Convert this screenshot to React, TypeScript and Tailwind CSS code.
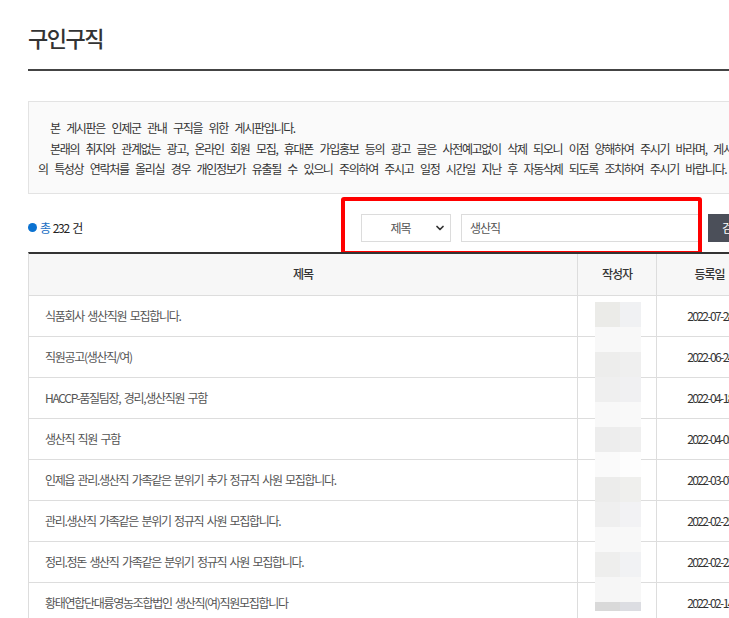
import { ChevronDown } from 'lucide-react';

const rows = [
  { title: '식품회사 생산직원 모집합니다.', date: '2022-07-28' },
  { title: '직원공고(생산직/여)', date: '2022-06-24' },
  { title: 'HACCP-품질팀장, 경리,생산직원 구함', date: '2022-04-18' },
  { title: '생산직 직원 구함', date: '2022-04-05' },
  { title: '인제읍 관리.생산직 가족같은 분위기 추가 정규직 사원 모집합니다.', date: '2022-03-07' },
  { title: '관리.생산직 가족같은 분위기 정규직 사원 모집합니다.', date: '2022-02-25' },
  { title: '정리.정돈 생산직 가족같은 분위기 정규직 사원 모집합니다.', date: '2022-02-23' },
  { title: '황태연합단대륭영농조합법인 생산직(여)직원모집합니다', date: '2022-02-14' },
];

// blurred author names, two cells per band
const mosaic = [
  ['#ebebe8', '#f0f1f3'],
  ['#f8f8f8', '#f8f8f8'],
  ['#ededec', '#efefef'],
  ['#efefef', '#f0f0f2'],
  ['#f8f8f8', '#f9f9f9'],
  ['#ededed', '#efefef'],
  ['#fafafa', '#fdfdfd'],
  ['#ececeb', '#efefed'],
  ['#efefef', '#f2f2f4'],
  ['#f8f8f8', '#f8f8f8'],
  ['#eeeeed', '#f1f2f4'],
  ['#f6f6f6', '#f7f7f7'],
];

export default function App() {
  return (
    <div className="w-full h-[618px] overflow-hidden bg-white font-['Noto_Sans_CJK_KR',sans-serif]">
      <div className="w-[1200px] ml-[28px]">
        {/* Page title */}
        <div className="pt-[24px] pb-[18px] border-b-2 border-[#444]">
          <h2 className="text-[22px] leading-[27px] tracking-[-1.5px] text-[#333] font-medium">구인구직</h2>
        </div>

        {/* Notice */}
        <div className="mt-[30px] border border-[#e3e3e3] bg-[#fafafa] pl-[9px] pt-[16px] pb-[13px] text-[12px] leading-[20.5px] tracking-[-1.3px] [word-spacing:5px] text-[#333] whitespace-nowrap">
          <p className="pl-[12px]">본 게시판은 인제군 관내 구직을 위한 게시판입니다.</p>
          <p className="pl-[12px]">
            본래의 취지와 관계없는 광고, 온라인 회원 모집, 휴대폰 가입홍보 등의 광고 글은 사전예고없이 삭제 되오니 이점 양해하여 주시기 바라며, 게시판
          </p>
          <p>의 특성상 연락처를 올리실 경우 개인정보가 유출될 수 있으니 주의하여 주시고 일정 시간일 지난 후 자동삭제 되도록 조치하여 주시기 바랍니다.</p>
        </div>

        {/* Count + search */}
        <div className="mt-[20px] flex items-center h-[28px]">
          <div className="w-[333px] flex items-center text-[12px] tracking-[-1.3px]">
            <span className="w-[9px] h-[9px] rounded-full bg-[#0b72d1] mr-[3px]" />
            <span className="text-[#1a6fc4]">총</span>
            <span className="ml-[3px] text-[#222] [word-spacing:2px]">232 건</span>
          </div>
          <div className="relative flex items-center h-[28px]">
            <div className="w-[90px] h-[28px] border border-[#dcdcdc] bg-white flex items-center text-[12px] tracking-[-1px] text-[#555]">
              <span className="flex-1 text-center pl-[5px]">제목</span>
              <ChevronDown className="w-[12px] h-[12px] mr-[4px] text-[#333]" strokeWidth={3.5} />
            </div>
            <div className="ml-[10px] w-[241px] h-[28px] border border-[#dcdcdc] bg-white flex items-center pl-[8px] text-[12px] tracking-[-1px] text-[#555]">
              생산직
            </div>
            <button className="ml-[6px] w-[60px] h-[28px] bg-[#4b4f59] text-white text-[12px] tracking-[-1px] pl-[14px] text-left">
              검색
            </button>
            {/* highlight annotation */}
            <div className="absolute left-[-20px] top-[-17px] w-[361px] h-[58px] border-4 border-[#ff0000] rounded-[3px] shadow-[0_0_0_2px_white] pointer-events-none" />
          </div>
        </div>

        {/* Table */}
        <div className="relative mt-[10px] border-t-2 border-[#333] border-l border-l-[#dddddd]">
          <div className="grid grid-cols-[549px_79px_106px_1fr] h-[42px] bg-[#f7f7f7] border-b border-[#dddddd] text-[12px] tracking-[-1px] text-[#333] font-medium">
            <div className="flex items-center justify-center border-r border-[#dddddd]">제목</div>
            <div className="flex items-center justify-center border-r border-[#dddddd]">작성자</div>
            <div className="flex items-center justify-center border-r border-[#dddddd]">등록일</div>
            <div className="flex items-center justify-center">조회수</div>
          </div>
          {rows.map(r => (
            <div key={r.date + r.title} className="grid grid-cols-[549px_79px_106px_1fr] h-[41px] border-b border-[#dddddd] text-[12px]">
              <div className="flex items-center pl-[16px] border-r border-[#dddddd] text-[#555] tracking-[-1.3px] [word-spacing:2px] whitespace-nowrap">{r.title}</div>
              <div className="border-r border-[#dddddd]" />
              <div className="flex items-center justify-center text-[#333] tracking-[-1.6px]">{r.date}</div>
              <div />
            </div>
          ))}
          <div className="absolute left-[566px] top-[48px] w-[46px] flex flex-col pointer-events-none">
            {mosaic.map((m, i) => (
              <div key={i} className="flex h-[25px]">
                <div className="w-[25px]" style={{ backgroundColor: m[0] }} />
                <div className="w-[21px]" style={{ backgroundColor: m[1] }} />
              </div>
            ))}
            <div className="flex h-[9px]">
              <div className="w-[25px] bg-[#d9d9d9]" />
              <div className="w-[21px] bg-[#dcdde2]" />
            </div>
          </div>
        </div>
      </div>
    </div>
  );
}
